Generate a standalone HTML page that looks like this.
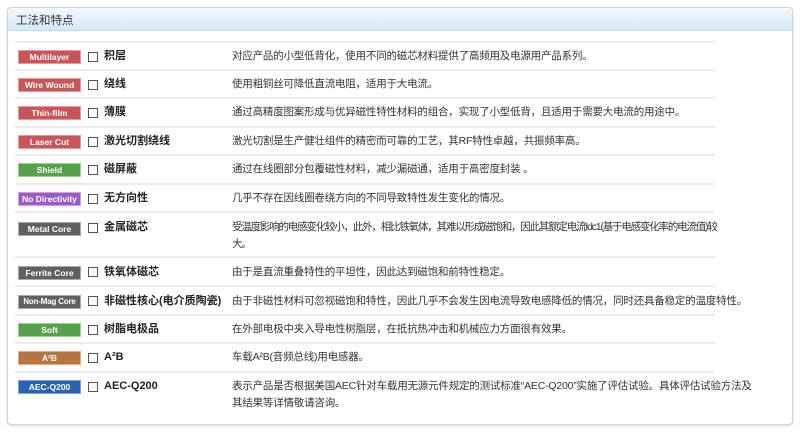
<!DOCTYPE html>
<html><head><meta charset="utf-8"><style>
*{margin:0;padding:0;box-sizing:border-box}
body{width:800px;height:433px;background:#fff;font-family:"Liberation Sans","Noto Sans CJK SC",sans-serif;font-size:10.5px;color:#333;position:relative;overflow:hidden}
.box{position:absolute;left:7px;top:7px;width:786px;height:418px;border:1px solid #d4d4d4;border-radius:4px;box-shadow:0 1px 3px rgba(0,0,0,.15);background:#fff}
.hd{height:23px;background:linear-gradient(#f4f9fd,#d3e8f7);border-bottom:1px solid #c2dcf0;border-radius:4px 4px 0 0;padding:4px 8px;font-size:11.5px;color:#333}
.row{position:absolute;left:15px;width:700px;border-top:2px solid #ececec}
.bd{position:absolute;left:3px;width:63px;height:14px;color:#fff;font-size:8.5px;font-weight:bold;text-align:center;line-height:12px;border:1px solid}
.cb{position:absolute;left:73px;width:10px;height:10px;border:1px solid #555;background:#fff}
.nm{position:absolute;left:89px;font-weight:bold;font-size:11px;color:#222;line-height:17px}
.ds{position:absolute;left:217px;line-height:17px;color:#333;letter-spacing:-.2px;white-space:nowrap}
.r{background:#c8555a;border-color:#e89a9e}
.g{background:#55a24a;border-color:#9ccf93}
.p{background:#9b5bc0;border-color:#c9a2de}
.k{background:#606060;border-color:#a8a8a8}
.o{background:#b87540;border-color:#dcae88}
.b{background:#2c62b2;border-color:#7ca2d8}
</style></head><body>
<div class="box"><div class="hd">工法和特点</div></div>
<div class="row" style="top:41px;height:29px"><div class="bd r" style="top:7px">Multilayer</div><div class="cb" style="top:9px"></div><div class="nm" style="top:5px">积层</div><div class="ds" style="top:5px">对应产品的小型低背化，使用不同的磁芯材料提供了高频用及电源用产品系列。</div></div>
<div class="row" style="top:69px;height:29px"><div class="bd r" style="top:7px">Wire Wound</div><div class="cb" style="top:9px"></div><div class="nm" style="top:5px">绕线</div><div class="ds" style="top:5px">使用粗铜丝可降低直流电阻，适用于大电流。</div></div>
<div class="row" style="top:97px;height:29px"><div class="bd r" style="top:7px">Thin-film</div><div class="cb" style="top:9px"></div><div class="nm" style="top:5px">薄膜</div><div class="ds" style="top:5px">通过高精度图案形成与优异磁性特性材料的组合，实现了小型低背，且适用于需要大电流的用途中。</div></div>
<div class="row" style="top:126px;height:29px"><div class="bd r" style="top:7px">Laser Cut</div><div class="cb" style="top:9px"></div><div class="nm" style="top:5px">激光切割绕线</div><div class="ds" style="top:5px">激光切割是生产健壮组件的精密而可靠的工艺，其RF特性卓越，共振频率高。</div></div>
<div class="row" style="top:154px;height:29px"><div class="bd g" style="top:7px">Shield</div><div class="cb" style="top:9px"></div><div class="nm" style="top:5px">磁屏蔽</div><div class="ds" style="top:5px">通过在线圈部分包覆磁性材料，减少漏磁通，适用于高密度封装 。</div></div>
<div class="row" style="top:183px;height:29px"><div class="bd p" style="top:7px">No Directivity</div><div class="cb" style="top:9px"></div><div class="nm" style="top:5px">无方向性</div><div class="ds" style="top:5px">几乎不存在因线圈卷绕方向的不同导致特性发生变化的情况。</div></div>
<div class="row" style="top:211px;height:46px"><div class="bd k" style="top:9px">Metal Core</div><div class="cb" style="top:10px"></div><div class="nm" style="top:6px">金属磁芯</div><div class="ds" style="top:6px;letter-spacing:-1.2px">受温度影响的电感变化较小，此外，相比铁氧体，其难以形成磁饱和，因此其额定电流Idc1(基于电感变化率的电流值)较<br>大。</div></div>
<div class="row" style="top:256px;height:30px"><div class="bd k" style="top:8px">Ferrite Core</div><div class="cb" style="top:9px"></div><div class="nm" style="top:6px">铁氧体磁芯</div><div class="ds" style="top:6px">由于是直流重叠特性的平坦性，因此达到磁饱和前特性稳定。</div></div>
<div class="row" style="top:285px;height:30px"><div class="bd k" style="top:8px;font-size:8px;letter-spacing:-.2px">Non-Mag Core</div><div class="cb" style="top:9px"></div><div class="nm" style="top:6px">非磁性核心(电介质陶瓷)</div><div class="ds" style="top:6px">由于非磁性材料可忽视磁饱和特性，因此几乎不会发生因电流导致电感降低的情况，同时还具备稳定的温度特性。</div></div>
<div class="row" style="top:314px;height:29px"><div class="bd g" style="top:7px">Soft</div><div class="cb" style="top:9px"></div><div class="nm" style="top:5px">树脂电极品</div><div class="ds" style="top:5px">在外部电极中夹入导电性树脂层，在抵抗热冲击和机械应力方面很有效果。</div></div>
<div class="row" style="top:342px;height:29px"><div class="bd o" style="top:7px">A²B</div><div class="cb" style="top:9px"></div><div class="nm" style="top:5px">A²B</div><div class="ds" style="top:5px">车载A²B(音频总线)用电感器。</div></div>
<div class="row" style="top:371px;height:46px"><div class="bd b" style="top:7px">AEC-Q200</div><div class="cb" style="top:9px"></div><div class="nm" style="top:5px">AEC-Q200</div><div class="ds" style="top:5px">表示产品是否根据美国AEC针对车载用无源元件规定的测试标准“AEC-Q200”实施了评估试验。具体评估试验方法及<br>其结果等详情敬请咨询。</div></div>
</body></html>
